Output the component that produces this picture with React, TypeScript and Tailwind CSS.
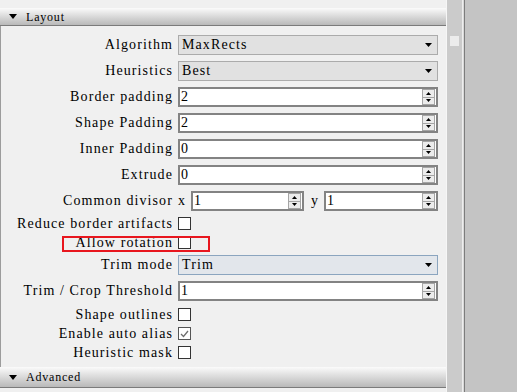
import React from "react";

const Down = ({ w = 7, h = 4 }: { w?: number; h?: number }) => (
  <svg width={w} height={h} viewBox={`0 0 ${w} ${h}`} className="block">
    <polygon points={`0,0 ${w},0 ${w / 2},${h}`} fill="#000" />
  </svg>
);
const Up = ({ w = 5, h = 3 }: { w?: number; h?: number }) => (
  <svg width={w} height={h} viewBox={`0 0 ${w} ${h}`} className="block">
    <polygon points={`0,${h} ${w},${h} ${w / 2},0`} fill="#000" />
  </svg>
);

const Header = ({ title, tall }: { title: string; tall?: boolean }) => (
  <div
    className={`${tall ? "h-[21px]" : "h-[18px]"} shrink-0 flex items-center bg-gradient-to-b from-[#fbfbfb] to-[#b9b9b9] border-b border-[#7b7b7b]`}
  >
    <div className="ml-[9px] w-[8px]">
      <Down w={8} h={5} />
    </div>
    <span className="ml-[9px] text-[12px] tracking-[0.8px] text-black leading-none">{title}</span>
  </div>
);

const Label = ({ children }: { children: React.ReactNode }) => (
  <div className="w-[172px] shrink-0 text-right whitespace-nowrap">{children}</div>
);

const Combo = ({ value, active }: { value: string; active?: boolean }) => (
  <div
    className={`h-[20px] w-full border flex items-center justify-between pl-[3px] pr-[5px] ${
      active ? "border-[#8ba5bf] bg-[#e2e6eb]" : "border-[#ababab] bg-[#e1e1e1]"
    }`}
  >
    <span>{value}</span>
    <Down />
  </div>
);

const SpinBtns = () => (
  <div className="w-[13px] h-full flex flex-col">
    <div className="flex-1 border border-[#a5a5a5] bg-[#ececec] flex items-center justify-center">
      <Up />
    </div>
    <div className="flex-1 border border-[#a5a5a5] border-t-0 bg-[#ececec] flex items-center justify-center">
      <svg width={5} height={3} viewBox="0 0 5 3" className="block">
        <polygon points="0,0 5,0 2.5,3" fill="#000" />
      </svg>
    </div>
  </div>
);

const Spin = ({ value, className = "w-full" }: { value: string; className?: string }) => (
  <div className={`h-[20px] border-2 border-[#838383] bg-white flex items-center justify-between pl-[1px] pr-[1px] ${className}`}>
    <span>{value}</span>
    <SpinBtns />
  </div>
);

const Check = ({ checked }: { checked?: boolean }) => (
  <div
    className={`w-[13px] h-[13px] border ${checked ? "border-[#555]" : "border-[#333]"} bg-white flex items-center justify-center`}
  >
    {checked && (
      <svg width={9} height={8} viewBox="0 0 9 8" className="block">
        <polyline points="1,4 3.5,6.5 8,1" fill="none" stroke="#6e6e6e" strokeWidth={1.3} />
      </svg>
    )}
  </div>
);

const Row = ({ label, children, className = "" }: { label: string; children: React.ReactNode; className?: string }) => (
  <div className={`flex items-center h-[20px] ${className}`}>
    <Label>{label}</Label>
    <div className="ml-[5px] w-[260px] flex items-center">{children}</div>
  </div>
);

const CheckRow = ({ label, checked, className = "", children }: { label: string; checked?: boolean; className?: string; children?: React.ReactNode }) => (
  <div className={`relative flex items-center h-[19px] ${className}`}>
    <Label>{label}</Label>
    <div className="ml-[5px]">
      <Check checked={checked} />
    </div>
    {children}
  </div>
);

export default function App() {
  return (
    <div className="w-[517px] h-[392px] flex bg-[#f0f0f0] overflow-hidden font-['Liberation_Serif',serif] text-black">
      <div className="w-[446px] shrink-0 flex flex-col">
        <div className="h-[8px] shrink-0" />
        <Header title="Layout" />
        <div className="flex-1 border-l border-[#9c9c9c] flex flex-col pt-[9px] text-[14px] tracking-[1.1px] leading-none">
          <Row label="Algorithm">
            <Combo value="MaxRects" />
          </Row>
          <Row label="Heuristics" className="mt-[6px]">
            <Combo value="Best" />
          </Row>
          <Row label="Border padding" className="mt-[6px]">
            <Spin value="2" />
          </Row>
          <Row label="Shape Padding" className="mt-[6px]">
            <Spin value="2" />
          </Row>
          <Row label="Inner Padding" className="mt-[6px]">
            <Spin value="0" />
          </Row>
          <Row label="Extrude" className="mt-[6px]">
            <Spin value="0" />
          </Row>
          <Row label="Common divisor" className="mt-[6px]">
            <span className="w-[7px]">x</span>
            <Spin value="1" className="ml-[6px] w-[113px]" />
            <span className="ml-[7px] w-[7px]">y</span>
            <Spin value="1" className="ml-[6px] flex-1" />
          </Row>
          <CheckRow label="Reduce border artifacts" className="mt-[3px]" />
          <CheckRow label="Allow rotation">
            <div className="absolute left-[61px] top-[3px] w-[148px] h-[16px] border-2 border-[#e8161e]" />
          </CheckRow>
          <Row label="Trim mode" className="mt-[3px]">
            <Combo value="Trim" active />
          </Row>
          <Row label="Trim / Crop Threshold" className="mt-[6px]">
            <Spin value="1" />
          </Row>
          <CheckRow label="Shape outlines" className="mt-[4px]" />
          <CheckRow label="Enable auto alias" checked />
          <CheckRow label="Heuristic mask" />
        </div>
        <Header title="Advanced" tall />
        <div className="h-[4px] shrink-0" />
      </div>
      <div className="w-[1px] shrink-0 bg-[#f6f6f6]" />
      <div className="w-[15px] shrink-0 bg-[#cbcbcb] flex flex-col">
        <div className="mt-[36px] ml-[3px] w-[9px] h-[10px] bg-[#ececec]" />
      </div>
      <div className="w-[1px] shrink-0 bg-[#eeeeee]" />
      <div className="w-[1px] shrink-0 bg-[#d8d8d8]" />
      <div className="w-[1px] shrink-0 bg-[#7d7d7d]" />
      <div className="flex-1 bg-[#c4c4c4]" />
    </div>
  );
}
